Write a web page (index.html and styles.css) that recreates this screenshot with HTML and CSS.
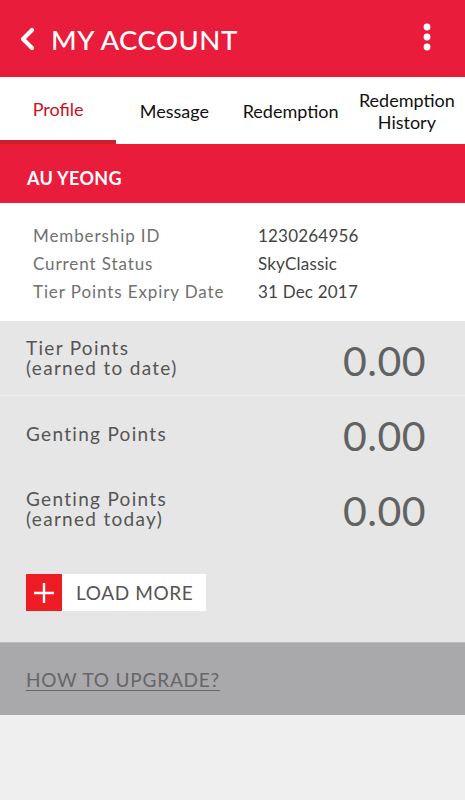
FILE: index.html
```html
<!DOCTYPE html>
<html>
<head>
<meta charset="utf-8">
<link rel="stylesheet" href="styles.css">
</head>
<body>
<div class="app">
  <header class="topbar">
    <div class="title-wrap">
      <svg class="back" width="18" height="24" viewBox="0 0 18 24"><path d="M14 3 L5 12 L14 21" fill="none" stroke="#fff" stroke-width="4.2" stroke-linecap="round" stroke-linejoin="round"/></svg>
      <h1 class="title">MY ACCOUNT</h1>
    </div>
    <svg class="more" width="8" height="28" viewBox="0 0 8 28"><circle cx="4" cy="4" r="3.4" fill="#fff"/><circle cx="4" cy="14" r="3.4" fill="#fff"/><circle cx="4" cy="24" r="3.4" fill="#fff"/></svg>
  </header>
  <nav class="tabs">
    <div class="tab active">Profile</div>
    <div class="tab">Message</div>
    <div class="tab">Redemption</div>
    <div class="tab">Redemption<br>History</div>
  </nav>
  <div class="name-band">AU YEONG</div>
  <section class="info">
    <div class="info-row"><span class="lbl">Membership ID</span><span class="val">1230264956</span></div>
    <div class="info-row"><span class="lbl">Current Status</span><span class="val">SkyClassic</span></div>
    <div class="info-row"><span class="lbl">Tier Points Expiry Date</span><span class="val">31 Dec 2017</span></div>
  </section>
  <section class="points">
    <div class="pt-row first">
      <div class="pt-lbl">Tier Points<br>(earned to date)</div>
      <div class="pt-val">0.00</div>
    </div>
    <div class="pt-row">
      <div class="pt-lbl">Genting Points</div>
      <div class="pt-val">0.00</div>
    </div>
    <div class="pt-row">
      <div class="pt-lbl">Genting Points<br>(earned today)</div>
      <div class="pt-val">0.00</div>
    </div>
    <div class="load-wrap">
      <button class="load">
        <span class="plus"><svg width="22" height="22" viewBox="0 0 22 22"><path d="M11 1 V21 M1 11 H21" stroke="#fff" stroke-width="2.4"/></svg></span>
        <span class="load-txt">LOAD MORE</span>
      </button>
    </div>
  </section>
  <section class="upgrade">
    <a class="up-link">HOW TO UPGRADE?</a>
  </section>
</div>
</body>
</html>
```
FILE: styles.css
```css
* { box-sizing: border-box; }
html, body { margin: 0; padding: 0; }
body {
  background: #efefef;
  font-family: "Lato", "Open Sans", sans-serif;
  width: 465px;
  height: 800px;
  overflow: hidden;
}
.app { display: flex; flex-direction: column; }
.topbar {
  height: 77px;
  background: #ea1c3b;
  border-bottom: 1px solid #f51a2a;
  display: flex;
  align-items: center;
  justify-content: space-between;
  padding: 3px 34px 0 18px;
}
.title-wrap { display: flex; align-items: center; gap: 15px; }
.back { display: block; margin-top: -1px; }
.title {
  margin: 0;
  color: #fff;
  font-family: "Lato", sans-serif;
  font-weight: 500;
  font-size: 27.5px;
  letter-spacing: 0.5px;
  line-height: 1;
}
.more { display: block; margin-top: -5px; }
.tabs {
  display: grid;
  grid-template-columns: repeat(4, 1fr);
  height: 69px;
  background: #fff;
  border-bottom: 2px solid #f51a2a;
}
.tab {
  display: flex;
  align-items: center;
  justify-content: center;
  text-align: center;
  font-family: "Lato", sans-serif;
  font-size: 18px;
  line-height: 22px;
  color: #111;
}
.tab.active {
  color: #cc1020;
  border-bottom: 4px solid #c9202d;
  padding-top: 1px;
}
.name-band {
  height: 57px;
  background: #ea1c3b;
  color: #fff;
  font-weight: 700;
  font-size: 18px;
  letter-spacing: 0.3px;
  display: flex;
  align-items: center;
  padding: 8px 27px 0;
  border-bottom: 1px solid #f02033;
}
.info {
  background: #fff;
  padding: 18px 33px 16px;
  display: flex;
  flex-direction: column;
}
.info-row {
  display: flex;
  height: 28px;
  align-items: center;
  font-size: 17px;
}
.lbl { width: 225px; color: #707070; letter-spacing: 0.9px; }
.val { color: #444; letter-spacing: 0.2px; }
.points {
  background: #e6e6e6;
  display: flex;
  flex-direction: column;
  padding-bottom: 31px;
}
.pt-row {
  height: 75px;
  display: flex;
  align-items: center;
  justify-content: space-between;
  padding: 0 39px 0 26px;
}
.pt-row.first { border-bottom: 1px solid #f0f0f0; }
.pt-lbl {
  font-size: 19px;
  line-height: 20px;
  color: #555;
  letter-spacing: 1.3px;
}
.pt-val {
  font-size: 41px;
  color: #626262;
  letter-spacing: 0.5px;
  padding-top: 4px;
}
.load-wrap { padding: 28px 26px 0; display: flex; }
.load {
  display: flex;
  align-items: stretch;
  height: 37px;
  width: 180px;
  padding: 0;
  border: 0;
  background: #fff;
  font-family: inherit;
  cursor: pointer;
}
.plus {
  width: 36px;
  background: #ee1c25;
  display: flex;
  align-items: center;
  justify-content: center;
}
.plus svg { display: block; }
.load-txt {
  display: flex;
  align-items: center;
  padding-left: 14px;
  font-size: 19px;
  color: #555;
  letter-spacing: 0.6px;
}
.upgrade {
  height: 73px;
  background: #a9a8ab;
  border-top: 1px solid #bdbdbd;
  display: flex;
  align-items: center;
  padding: 0 26px;
}
.up-link {
  font-size: 19px;
  color: #666;
  text-decoration: underline;
  text-underline-offset: 3px;
  letter-spacing: 0.8px;
}
```
